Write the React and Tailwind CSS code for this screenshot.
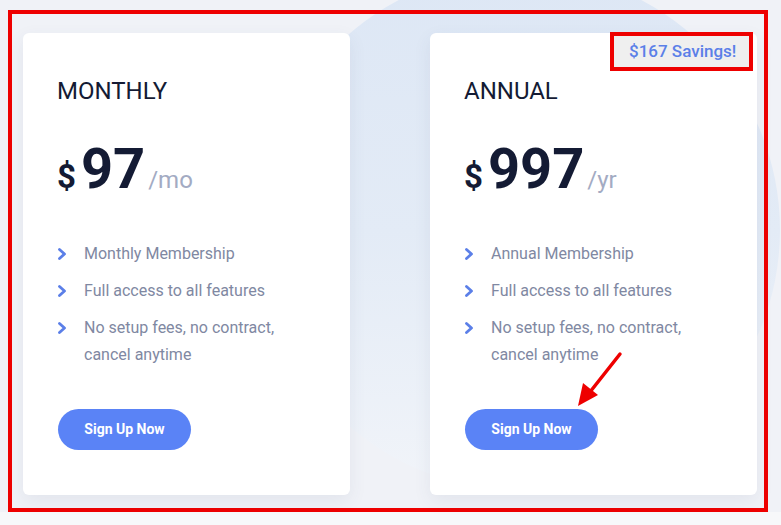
import React from 'react';

const PLANS = [
  {
    name: 'MONTHLY',
    price: '97',
    unit: '/mo',
    features: ['Monthly Membership', 'Full access to all features', 'No setup fees, no contract, cancel anytime'],
  },
  {
    name: 'ANNUAL',
    price: '997',
    unit: '/yr',
    features: ['Annual Membership', 'Full access to all features', 'No setup fees, no contract, cancel anytime'],
    badge: '$167 Savings!',
  },
];

function Chevron() {
  return (
    <svg width="9" height="12" viewBox="0 0 9 12" className="shrink-0 mt-[8px]">
      <polyline points="1.5,1.5 6.5,6 1.5,10.5" fill="none" stroke="#5b7fe8" strokeWidth="2.8" strokeLinecap="round" strokeLinejoin="round" />
    </svg>
  );
}

function PlanCard({ plan }) {
  return (
    <div className="relative w-[327px] h-[462px] bg-white rounded-[6px] shadow-[0_6px_18px_rgba(60,80,120,0.08)] pl-[34px] pr-[34px] pt-[44px]">
      {plan.badge && (
        <div className="absolute right-[4px] top-[-1px] w-[143px] border-[4px] border-[#ee0000] bg-[#efefef] pl-[15px] h-[39px] flex items-center">
          <span className="text-[17px] font-medium text-[#5b7fe8] leading-none whitespace-nowrap">{plan.badge}</span>
        </div>
      )}
      <h2 className="text-[24px] leading-[28px] text-[#141b34] font-normal">{plan.name}</h2>
      <div className="flex items-baseline mt-[36px] h-[56px]">
        <span className="text-[33px] font-bold text-[#141b34] leading-none mr-[5px]">$</span>
        <span className="text-[56px] font-bold text-[#141b34] leading-none">{plan.price}</span>
        <span className="text-[24px] text-[#a3abc3] leading-none ml-[3px]">{plan.unit}</span>
      </div>
      <ul className="mt-[43px] flex flex-col gap-[10px]">
        {plan.features.map(f => (
          <li key={f} className="flex gap-[17px] pl-[1px]">
            <Chevron />
            <span className="text-[16px] leading-[27px] text-[#8088a2]">{f}</span>
          </li>
        ))}
      </ul>
      <button className="mt-[41px] ml-[1px] w-[133px] h-[41px] rounded-full bg-[#5a83f6] text-white text-[14px] font-bold">
        Sign Up Now
      </button>
    </div>
  );
}

export default function App() {
  return (
    <div className="relative w-[781px] h-[525px] overflow-hidden bg-[#f0f2f7]" style={{ fontFamily: 'Roboto, "Liberation Sans", sans-serif' }}>
      {/* soft background blob */}
      <div className="absolute left-[260px] top-[-30px] w-[520px] h-[520px] rounded-full bg-gradient-to-b from-[#dde7f5] via-[#e3ebf6] to-[#f1f4f9]" />
      <div className="absolute left-0 bottom-0 w-full h-[13px] bg-[#f7f8fa]" />

      <div className="relative ml-[8px] mt-[10px] w-[760px] h-[502px] border-[4px] border-[#ee0000] pl-[11px] pt-[19px]">
        <div className="flex gap-[80px]">
          {PLANS.map(p => <PlanCard key={p.name} plan={p} />)}
        </div>
      </div>

      {/* annotation arrow */}
      <svg className="absolute left-0 top-0 pointer-events-none" width="781" height="525">
        <line x1="620" y1="354" x2="590" y2="392" stroke="#ee0000" strokeWidth="3.5" strokeLinecap="round" />
        <polygon points="578,406 583,383 598,395" fill="#ee0000" />
      </svg>
    </div>
  );
}
